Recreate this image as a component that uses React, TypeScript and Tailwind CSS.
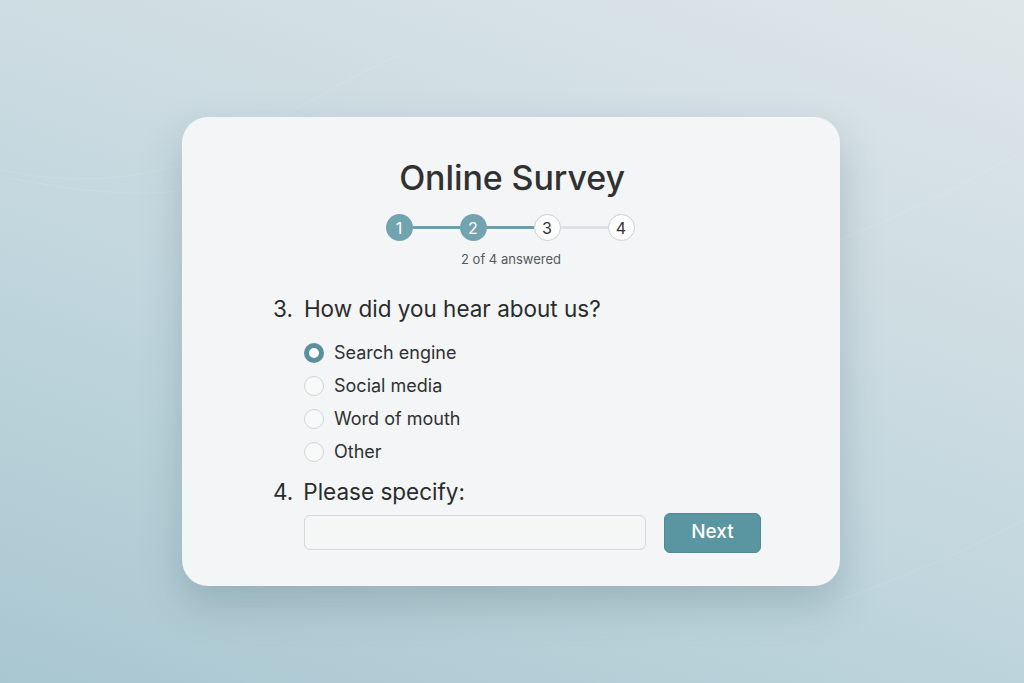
import React from "react";

const steps = [
  { n: 1, done: true },
  { n: 2, done: true },
  { n: 3, done: false },
  { n: 4, done: false },
];

const options = ["Search engine", "Social media", "Word of mouth", "Other"];

export default function App() {
  return (
    <div
      className="relative w-[1024px] h-[683px] overflow-hidden flex items-start pl-[182px] bg-[linear-gradient(20deg,#a9c7d1_0%,#c3d7de_45%,#dfe6e9_100%)]"
      style={{ fontFamily: "Inter, 'Liberation Sans', sans-serif" }}
    >
      {/* faint background streaks */}
      <svg className="absolute inset-0" width="1024" height="683" fill="none">
        <path d="M0 170 Q140 200 260 130 T400 55" stroke="#ffffff" strokeOpacity="0.1" strokeWidth="1" />
        <path d="M10 178 Q120 200 185 190" stroke="#ffffff" strokeOpacity="0.1" strokeWidth="1" />
        <path d="M840 240 Q940 200 1024 150" stroke="#ffffff" strokeOpacity="0.12" strokeWidth="1" />
        <path d="M840 600 Q950 560 1024 520" stroke="#ffffff" strokeOpacity="0.1" strokeWidth="1" />
      </svg>

      {/* Card */}
      <div className="relative mt-[117px] w-[658px] h-[469px] rounded-[26px] bg-[#f4f5f6] shadow-[0_18px_40px_rgba(60,90,100,0.25)] flex flex-col items-center">
        <h1 className="mt-[40px] text-[34px] leading-[42px] text-[#2f3133] font-medium tracking-[-0.1px] translate-x-[1px]">
          Online Survey
        </h1>

        {/* Stepper */}
        <div className="mt-[15px] flex items-center -translate-x-[1px]">
          {steps.map((s, i) => (
            <React.Fragment key={s.n}>
              {i > 0 && (
                <div
                  className={
                    steps[i - 1].done
                      ? "w-[47px] h-[3px] bg-[#6a9fab]"
                      : "w-[47px] h-[3px] bg-[#dde1e3]"
                  }
                />
              )}
              <div
                className={
                  s.done
                    ? "w-[27px] h-[27px] rounded-full bg-[#72a4b0] text-white text-[16px] flex items-center justify-center"
                    : "w-[27px] h-[27px] rounded-full bg-white border-[1.5px] border-[#c9d0d3] text-[#333] text-[16px] flex items-center justify-center"
                }
              >
                {s.n}
              </div>
            </React.Fragment>
          ))}
        </div>
        <div className="mt-[9px] text-[13px] text-[#555a5d]">2 of 4 answered</div>

        {/* Questions */}
        <div className="w-full pl-[91px] pr-[78px] mt-[25px]">
          <div className="text-[22.5px] leading-[28px] text-[#2a2c2e]">
            <span className="mr-[11px]">3.</span>How did you hear about us?
          </div>

          <div className="mt-[19px] pl-[31px] flex flex-col gap-[11px]">
            {options.map((o, i) => (
              <label key={o} className="flex items-center gap-[10px] h-[22px] text-[18px] text-[#2f3133]">
                {i === 0 ? (
                  <span className="w-[20px] h-[20px] rounded-full border-[5px] border-[#5a8f9b] bg-white" />
                ) : (
                  <span className="w-[20px] h-[20px] rounded-full border-[1.5px] border-[#cfd5d8] bg-[#f8f9f9]" />
                )}
                {o}
              </label>
            ))}
          </div>

          <div className="mt-[15px] text-[22.5px] leading-[28px] text-[#2a2c2e]">
            <span className="mr-[10px]">4.</span>Please specify:
          </div>

          <div className="mt-[7px] pl-[31px] flex items-center gap-[18px]">
            <input
              type="text"
              className="w-[342px] h-[35px] rounded-[6px] border border-[#d3d8db] bg-[#f5f6f6] px-3 focus:outline-none"
            />
            <button className="w-[97px] h-[40px] rounded-[6px] bg-[#5a96a1] text-white text-[19px] font-medium border border-[#4f8a95]">
              Next
            </button>
          </div>
        </div>
      </div>
    </div>
  );
}
